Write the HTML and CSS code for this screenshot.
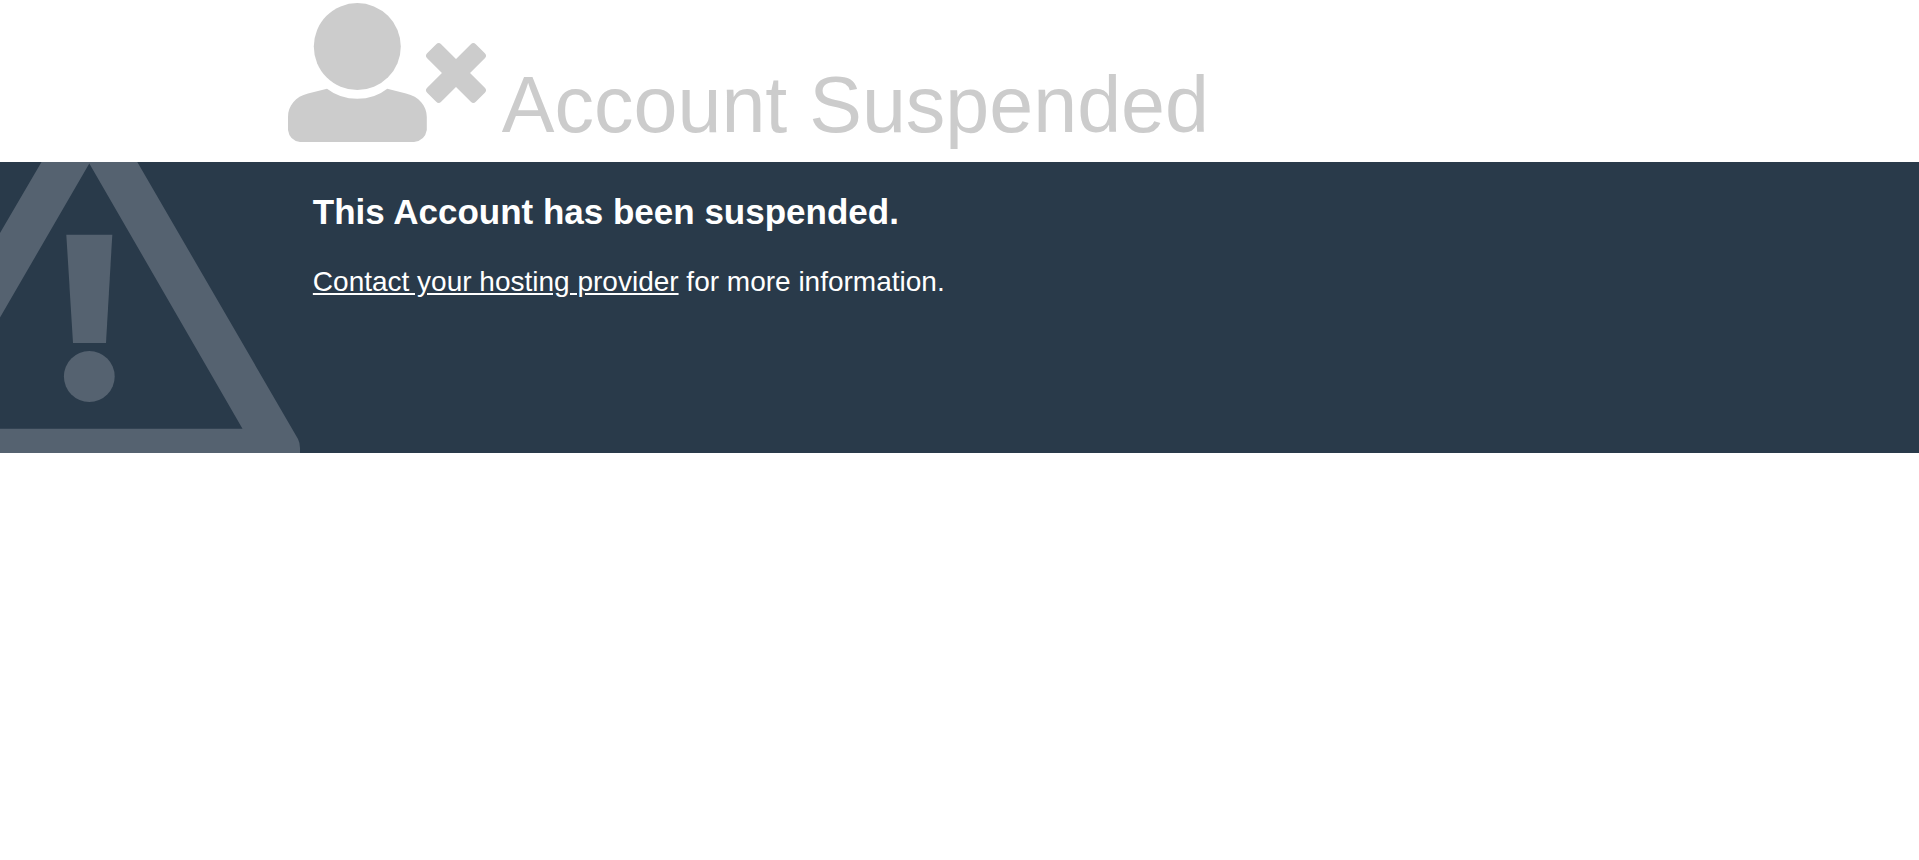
FILE: index.html
```html
<!DOCTYPE html>
<html lang="en">
<head>
    <meta charset="UTF-8">
    <meta name="viewport" content="width=device-width, initial-scale=1.0">
    <title>Account Suspended</title>
    <link rel="stylesheet" href="styles.css">
</head>
<body>
    <header class="container page-header">
        <svg class="user-icon" viewBox="0 0 200 142" aria-hidden="true">
            <circle cx="69.3" cy="46.6" r="43.5"/>
            <path d="M39 88.7Q52 98.8 69.3 98.8T99.3 88.7L118 93.6C131 96.5 138.8 106 138.8 117V130Q137 140.5 126 142H12Q1.5 140.5 0 130V117C0 106 7.5 96.5 20 93.6Z"/>
            <g transform="rotate(45 168 73)">
                <rect x="133.6" y="63.1" width="68.8" height="19.8" rx="3.5"/>
                <rect x="158.1" y="38.6" width="19.8" height="68.8" rx="3.5"/>
            </g>
        </svg>
        <h1>Account Suspended</h1>
    </header>
    <main class="notice">
        <svg class="warning-icon" viewBox="0 0 300 291" aria-hidden="true">
            <path fill-rule="evenodd" d="M41.5 0H137.3L298 277Q300 281 300 286V291H0V266.7H242.5L89.3 1.5L0 155.5V71Z"/>
            <path d="M66.3 72.7H112.3L106 181H73Z"/>
            <circle cx="89.3" cy="214.5" r="25.4"/>
        </svg>
        <section class="container notice-text">
            <h2>This Account has been suspended.</h2>
            <p><a href="#">Contact your hosting provider</a> for more information.</p>
        </section>
    </main>
</body>
</html>
```
FILE: styles.css
```css
body {
    margin: 0;
    background-color: #fff;
    color: #ccc;
    font-family: Arial, "Liberation Sans", sans-serif;
    font-size: 28px;
    line-height: 40px;
}
.container {
    width: 70%;
    margin: 0 auto;
}
.page-header {
    display: flex;
    align-items: flex-start;
    gap: 14px;
    padding-bottom: 11px;
}
.user-icon {
    flex: none;
    width: 200px;
    height: 142px;
    fill: #ccc;
}
h1 {
    margin: 0;
    padding-top: 59px;
    font-size: 79px;
    font-weight: normal;
    line-height: 92px;
}
.notice {
    position: relative;
    min-height: 291px;
    background-color: #293a4a;
    color: #fff;
}
.warning-icon {
    position: absolute;
    top: 0;
    left: 0;
    width: 300px;
    height: 291px;
    fill: #556270;
}
.notice-text {
    position: relative;
    box-sizing: border-box;
    padding: 30px 25px;
}
h2 {
    margin: 0;
    font-size: 35px;
    line-height: 40px;
}
p {
    margin: 30px 0 0;
}
a {
    color: #fff;
}
```
